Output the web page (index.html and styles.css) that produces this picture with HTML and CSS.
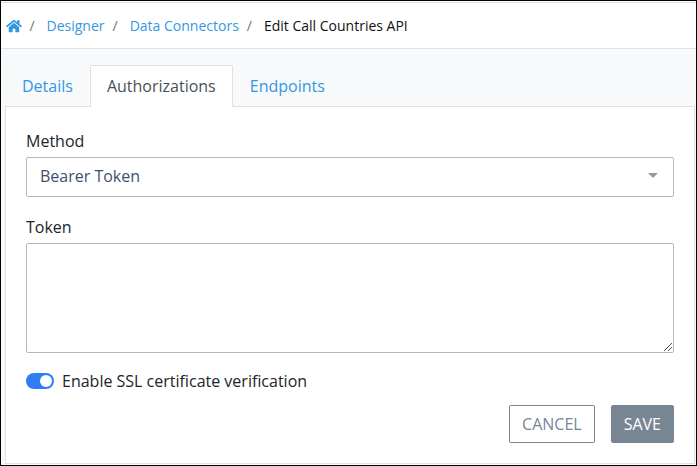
FILE: index.html
```html
<!DOCTYPE html>
<html lang="en">
<head>
<meta charset="utf-8">
<title>Edit Call Countries API</title>
<link rel="stylesheet" href="styles.css">
</head>
<body>
<div class="frame">
  <nav class="breadcrumb">
    <a class="home" href="#" aria-label="Home"><svg viewBox="0 0 576 512" width="16" height="14"><path fill="currentColor" d="M280 148 96 300v164a16 16 0 0 0 16 16h112a16 16 0 0 0 16-16v-96a16 16 0 0 1 16-16h64a16 16 0 0 1 16 16v96a16 16 0 0 0 16 16h112a16 16 0 0 0 16-16V300L296 148a12 12 0 0 0-16 0zM572 251l-84-69V44a12 12 0 0 0-12-12h-56a12 12 0 0 0-12 12v73l-89-74a48 48 0 0 0-61 0L4 251a12 12 0 0 0-1 17l25 31a12 12 0 0 0 17 2L280 107a12 12 0 0 1 16 0l235 194a12 12 0 0 0 17-2l25-31a12 12 0 0 0-1-17z"/></svg></a>
    <span class="sep">/</span>
    <a class="designer" href="#">Designer</a>
    <span class="sep">/</span>
    <a class="connectors" href="#">Data Connectors</a>
    <span class="sep">/</span>
    <span class="current">Edit Call Countries API</span>
  </nav>
  <main class="content">
    <div class="tabs">
      <a class="tab" href="#">Details</a>
      <a class="tab active" href="#">Authorizations</a>
      <a class="tab" href="#">Endpoints</a>
    </div>
    <form class="panel">
      <label class="label">Method</label>
      <div class="select"><span>Bearer Token</span><i class="caret"></i></div>
      <label class="label" for="token">Token</label>
      <div class="textarea-wrap">
        <textarea class="textarea" id="token"></textarea>
        <svg class="grip" viewBox="0 0 8 8" width="8" height="8" shape-rendering="crispEdges"><path fill="#555" d="M0 7h1v1H0zM1 6h1v1H1zM2 5h1v1H2zM3 4h1v1H3zM4 3h1v1H4zM5 2h1v1H5zM6 1h1v1H6zM7 0h1v1H7zM4 7h1v1H4zM5 6h1v1H5zM6 5h1v1H6zM7 4h1v1H7z"/></svg>
      </div>
      <div class="switch-row"><span class="switch"><i class="knob"></i></span><span>Enable SSL certificate verification</span></div>
      <div class="actions">
        <button class="btn" type="button">CANCEL</button>
        <button class="btn primary" type="button">SAVE</button>
      </div>
    </form>
  </main>
</div>
</body>
</html>
```
FILE: styles.css
```css
* { box-sizing: border-box; }
body {
  margin: 0;
  font: 400 16px/24px "Open Sans", "Noto Sans", sans-serif;
  color: #212529;
}
a { color: #3498e0; text-decoration: none; }
.frame {
  display: flex;
  flex-direction: column;
  width: 697px;
  height: 466px;
  padding-top: 1px;
  border: 1px solid #000;
  background: #fff;
}
.breadcrumb {
  display: flex;
  flex: none;
  align-items: center;
  height: 47px;
  padding-left: 5px;
  border-top: 1px solid #e0e0e3;
  border-bottom: 1px solid #dee2e6;
  font-size: 14px;
  white-space: nowrap;
}
.home { display: flex; width: 15.4px; }
.home svg { flex: none; }
.sep { color: #6c757d; padding: 0 12px 0 8px; }
.current { color: #111; }
.content {
  flex: 1;
  padding: 16px 1px 1px 4px;
  background: #f7f9fb;
}
.tabs {
  display: flex;
  height: 42px;
  margin-bottom: -1px;
}
.tab {
  padding: 8px 16px 0;
  border: 1px solid transparent;
}
.tab.active {
  position: relative;
  background: #fff;
  border-color: #dee2e6 #dee2e6 #fff;
  border-radius: 2px 2px 0 0;
  color: #495057;
}
.panel {
  height: 358px;
  padding: 22px 20px 0;
  background: #fff;
  border: 1px solid #dee2e6;
}
.label { display: block; height: 28px; }
.select {
  display: flex;
  align-items: center;
  justify-content: space-between;
  height: 40px;
  margin-bottom: 18px;
  padding: 0 15px 2px 13px;
  border: 1px solid #adb9c3;
  border-radius: 2px;
  color: #3d5170;
}
.caret {
  margin-bottom: 2px;
  border: 5px solid transparent;
  border-top-color: #999;
  border-bottom: 0;
}
.textarea-wrap { position: relative; }
.textarea {
  display: block;
  width: 100%;
  height: 110px;
  border: 1px solid #adb9c3;
  border-radius: 2px;
  resize: none;
}
.grip { position: absolute; right: 2px; bottom: 2px; }
.switch-row {
  display: flex;
  align-items: center;
  gap: 8px;
  height: 24px;
  margin-top: 16px;
}
.switch {
  display: flex;
  justify-content: flex-end;
  width: 28px;
  height: 16px;
  padding: 2px;
  border-radius: 8px;
  background: #2f7df6;
}
.knob { width: 12px; height: 12px; border-radius: 50%; background: #fff; }
.actions {
  display: flex;
  justify-content: flex-end;
  gap: 16px;
  margin-top: 12px;
}
.btn {
  height: 38px;
  padding: 0 12px;
  border: 1px solid #788693;
  border-radius: 2px;
  background: #fff;
  color: #788693;
  font: inherit;
}
.btn.primary { background: #788693; color: #fff; }
```
